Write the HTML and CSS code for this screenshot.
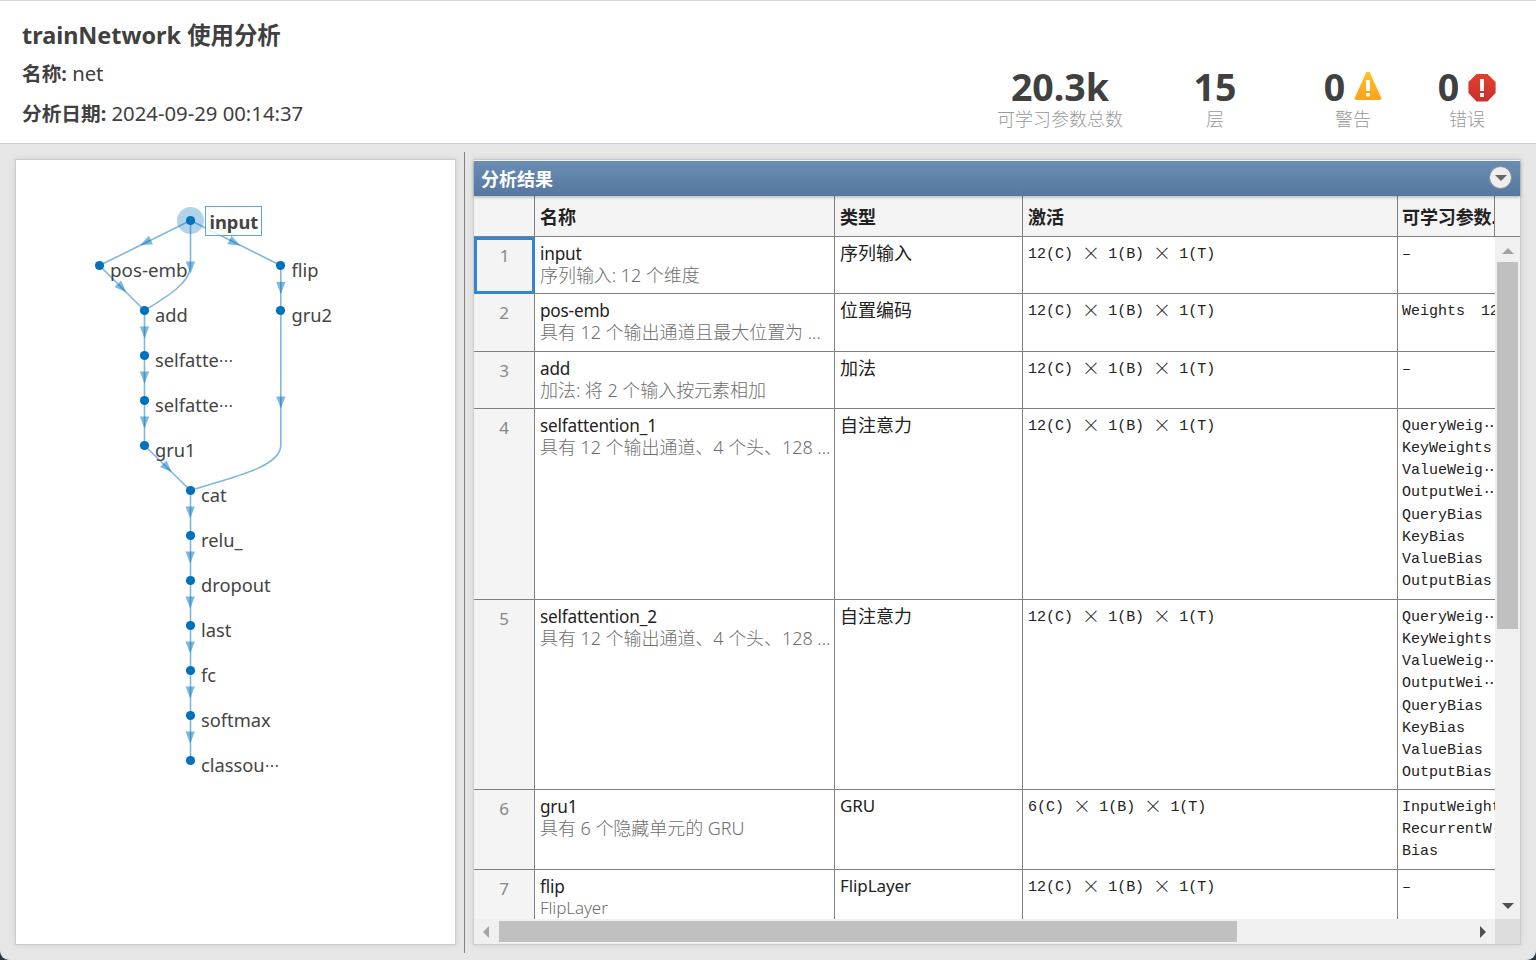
FILE: index.html
```
<!DOCTYPE html>
<html lang="zh-CN">
<head>
    <meta charset="UTF-8">
    <meta name="viewport" content="width=device-width, initial-scale=1.0">
    <title>trainNetwork 使用分析</title>
    <link rel="stylesheet" href="styles.css">
</head>
<body>
<div class="app">

    <!-- Header -->
    <header class="header">
        <div class="info">
            <h1>trainNetwork 使用分析</h1>
            <p><b>名称:</b> <span class="date">net</span></p>
            <p><b>分析日期:</b> <span class="date">2024-09-29 00:14:37</span></p>
        </div>
        <div class="stats">
            <div class="stat stat-params">
                <div class="value">20.3k</div>
                <div class="caption">可学习参数总数</div>
            </div>
            <div class="stat stat-layers">
                <div class="value">15</div>
                <div class="caption">层</div>
            </div>
            <div class="stat stat-warnings">
                <div class="value">0
                    <svg width="28" height="30" viewBox="0 0 28 30">
                        <defs>
                            <linearGradient id="warn" x1="0" y1="0" x2="0" y2="1">
                                <stop offset="0" stop-color="#fdc02f"/>
                                <stop offset="1" stop-color="#fba31b"/>
                            </linearGradient>
                        </defs>
                        <path d="M12.2 .6Q14 -1.8 15.8 .6L27.2 25.4Q27.8 28 25.4 28H2.6Q.2 28 .8 25.4Z" fill="url(#warn)"/>
                        <path d="M12.1 8h3.8v11h-3.8zM12.1 21h3.8v3.6h-3.8z" fill="#fff"/>
                    </svg>
                </div>
                <div class="caption">警告</div>
            </div>
            <div class="stat stat-errors">
                <div class="value">0
                    <svg width="28" height="30" viewBox="0 0 28 30">
                        <defs>
                            <linearGradient id="err" x1="0" y1="0" x2="0" y2="1">
                                <stop offset="0" stop-color="#e0402f"/>
                                <stop offset="1" stop-color="#c9302a"/>
                            </linearGradient>
                        </defs>
                        <path d="M8.5 2h11L27.6 10v11l-8.1 8.5h-11L.4 21V10z" fill="url(#err)"/>
                        <path d="M12.1 7h3.8v12h-3.8zM12.1 21h3.8v4h-3.8z" fill="#fff"/>
                    </svg>
                </div>
                <div class="caption">错误</div>
            </div>
        </div>
    </header>

    <main class="main">

        <!-- Network graph -->
        <section class="graph">
            <svg width="439" height="784" viewBox="16 160 439 784">
                <defs>
                    <path id="arrow" d="M-4.7 -6H4.7L0 6Z"/>
                </defs>
                <g class="edges">
                    <path d="M190.5 220.5L99.5 265.5L144.5 310.5V445.5L190.5 490.5V760.5"/>
                    <path d="M190.5 220.5V266C190.5 283 165 298 144.5 310.5"/>
                    <path d="M190.5 220.5L280.8 265.5V445C281 468 228 478 190.5 490.5"/>
                </g>
                <g class="arrows">
                    <use href="#arrow" transform="translate(145.5 242.7) rotate(63.7)"/>
                    <use href="#arrow" transform="translate(234.8 242.7) rotate(-63.5)"/>
                    <use href="#arrow" transform="translate(190.5 267.5)"/>
                    <use href="#arrow" transform="translate(122 288) rotate(-45)"/>
                    <use href="#arrow" transform="translate(280.8 288)"/>
                    <use href="#arrow" transform="translate(280.8 402.5)"/>
                    <use href="#arrow" transform="translate(144.5 332.5)"/>
                    <use href="#arrow" transform="translate(144.5 377.5)"/>
                    <use href="#arrow" transform="translate(144.5 422.5)"/>
                    <use href="#arrow" transform="translate(167.5 468) rotate(-45)"/>
                    <use href="#arrow" transform="translate(190.2 512.5)"/>
                    <use href="#arrow" transform="translate(190.2 557.5)"/>
                    <use href="#arrow" transform="translate(190.2 602.5)"/>
                    <use href="#arrow" transform="translate(190.2 647.5)"/>
                    <use href="#arrow" transform="translate(190.2 692.5)"/>
                    <use href="#arrow" transform="translate(190.2 737.5)"/>
                </g>
                <circle class="halo" cx="190.5" cy="220.5" r="13.5"/>
                <g class="nodes">
                    <circle cx="190.5" cy="220.5" r="4.6"/>
                    <circle cx="99.5" cy="265.5" r="4.6"/>
                    <circle cx="280.5" cy="265.5" r="4.6"/>
                    <circle cx="144.5" cy="310.5" r="4.6"/>
                    <circle cx="280.5" cy="310.5" r="4.6"/>
                    <circle cx="144.5" cy="355.5" r="4.6"/>
                    <circle cx="144.5" cy="400.5" r="4.6"/>
                    <circle cx="144.5" cy="445.5" r="4.6"/>
                    <circle cx="190.5" cy="490.5" r="4.6"/>
                    <circle cx="190.5" cy="535.5" r="4.6"/>
                    <circle cx="190.5" cy="580.5" r="4.6"/>
                    <circle cx="190.5" cy="625.5" r="4.6"/>
                    <circle cx="190.5" cy="670.5" r="4.6"/>
                    <circle cx="190.5" cy="715.5" r="4.6"/>
                    <circle cx="190.5" cy="760.5" r="4.6"/>
                </g>
                <rect class="selected-box" x="205.5" y="206.5" width="56" height="29"/>
                <g class="labels">
                    <text class="selected" x="209.5" y="229">input</text>
                    <text class="wide" x="110" y="277">pos-emb</text>
                    <text x="291.5" y="277">flip</text>
                    <text x="155" y="322">add</text>
                    <text x="291.5" y="322">gru2</text>
                    <text x="155" y="367">selfatte<tspan class="dots">⋯</tspan></text>
                    <text x="155" y="412">selfatte<tspan class="dots">⋯</tspan></text>
                    <text x="155" y="457">gru1</text>
                    <text x="201" y="502">cat</text>
                    <text x="201" y="547">relu_</text>
                    <text x="201" y="592">dropout</text>
                    <text x="201" y="637">last</text>
                    <text x="201" y="682">fc</text>
                    <text x="201" y="727">softmax</text>
                    <text x="201" y="772">classou<tspan class="dots">⋯</tspan></text>
                </g>
            </svg>
        </section>

        <div class="divider"></div>

        <!-- Analysis result -->
        <section class="result">
            <div class="result-title">
                <span class="result-name">分析结果</span>
                <span class="menu-button">
                    <svg width="12" height="6" viewBox="0 0 12 6"><path d="M0 0h12L6 6z" fill="#666"/></svg>
                </span>
            </div>
            <div class="row head">
                <div class="cell num"></div>
                <div class="cell">名称</div>
                <div class="cell">类型</div>
                <div class="cell">激活</div>
                <div class="cell last">可学习参数...</div>
            </div>
            <div class="viewport">
                <div class="rows">
                    <div class="row">
                        <div class="cell num current">1</div>
                        <div class="cell"><div class="name">input</div><div class="desc">序列输入: 12 个维度</div></div>
                        <div class="cell">序列输入</div>
                        <div class="cell mono">12(C) <i>×</i> 1(B) <i>×</i> 1(T)</div>
                        <div class="cell mono last">–</div>
                    </div>
                    <div class="row row-58">
                        <div class="cell num">2</div>
                        <div class="cell"><div class="name">pos-emb</div><div class="desc">具有 12 个输出通道且最大位置为 ...</div></div>
                        <div class="cell">位置编码</div>
                        <div class="cell mono">12(C) <i>×</i> 1(B) <i>×</i> 1(T)</div>
                        <div class="cell mono last params"><span>Weights</span><span>12</span></div>
                    </div>
                    <div class="row">
                        <div class="cell num">3</div>
                        <div class="cell"><div class="name">add</div><div class="desc">加法: 将 2 个输入按元素相加</div></div>
                        <div class="cell">加法</div>
                        <div class="cell mono">12(C) <i>×</i> 1(B) <i>×</i> 1(T)</div>
                        <div class="cell mono last">–</div>
                    </div>
                    <div class="row row-191">
                        <div class="cell num">4</div>
                        <div class="cell"><div class="name">selfattention_1</div><div class="desc">具有 12 个输出通道、4 个头、128 ...</div></div>
                        <div class="cell">自注意力</div>
                        <div class="cell mono">12(C) <i>×</i> 1(B) <i>×</i> 1(T)</div>
                        <div class="cell mono last">QueryWeig<s>⋯</s><br>KeyWeights<br>ValueWeig<s>⋯</s><br>OutputWei<s>⋯</s><br>QueryBias<br>KeyBias<br>ValueBias<br>OutputBias</div>
                    </div>
                    <div class="row row-190">
                        <div class="cell num">5</div>
                        <div class="cell"><div class="name">selfattention_2</div><div class="desc">具有 12 个输出通道、4 个头、128 ...</div></div>
                        <div class="cell">自注意力</div>
                        <div class="cell mono">12(C) <i>×</i> 1(B) <i>×</i> 1(T)</div>
                        <div class="cell mono last">QueryWeig<s>⋯</s><br>KeyWeights<br>ValueWeig<s>⋯</s><br>OutputWei<s>⋯</s><br>QueryBias<br>KeyBias<br>ValueBias<br>OutputBias</div>
                    </div>
                    <div class="row row-80">
                        <div class="cell num">6</div>
                        <div class="cell"><div class="name">gru1</div><div class="desc">具有 6 个隐藏单元的 GRU</div></div>
                        <div class="cell latin">GRU</div>
                        <div class="cell mono">6(C) <i>×</i> 1(B) <i>×</i> 1(T)</div>
                        <div class="cell mono last">InputWeights<br>RecurrentW<s>⋯</s><br>Bias</div>
                    </div>
                    <div class="row">
                        <div class="cell num">7</div>
                        <div class="cell"><div class="name">flip</div><div class="desc latin">FlipLayer</div></div>
                        <div class="cell latin">FlipLayer</div>
                        <div class="cell mono">12(C) <i>×</i> 1(B) <i>×</i> 1(T)</div>
                        <div class="cell mono last">–</div>
                    </div>
                </div>
                <div class="vscroll">
                    <svg width="12" height="6" viewBox="0 0 12 6"><path d="M0 6h12L6 0z" fill="#a3a3a3"/></svg>
                    <div class="vthumb"></div>
                    <svg class="down" width="12" height="6" viewBox="0 0 12 6"><path d="M0 0h12L6 6z" fill="#505050"/></svg>
                </div>
            </div>
            <div class="hscroll">
                <svg width="6" height="12" viewBox="0 0 6 12"><path d="M6 0v12L0 6z" fill="#a3a3a3"/></svg>
                <div class="hthumb"></div>
                <svg class="right" width="6" height="12" viewBox="0 0 6 12"><path d="M0 0v12l6-6z" fill="#505050"/></svg>
                <div class="corner"></div>
            </div>
        </section>
    </main>
</div>
</body>
</html>
```
FILE: styles.css
```
* {
    box-sizing: border-box;
}

html {
    background-color: #2b3644;
}

body {
    margin: 0;
    font-family: "Noto Sans", "Noto Sans CJK SC", sans-serif;
    font-size: 18px;
    color: #222;
}

svg {
    display: block;
    flex: none;
}

.app {
    display: flex;
    flex-direction: column;
    height: 960px;
    overflow: hidden;
    background-color: #e6e6e6;
    border-top: 1px solid #dadada;
    border-radius: 0 0 9px 9px;
}

/* Header */
.header {
    display: flex;
    justify-content: space-between;
    height: 143px;
    padding: 0 24px 0 22px;
    background-color: #fff;
    border-bottom: 1px solid #ccc;
    color: #404040;
}

.info {
    padding-top: 16px;
}

.info h1 {
    margin: 0;
    font-size: 23.4px;
    line-height: 37px;
}

.info p {
    height: 40px;
    margin: 0;
    font-size: 20px;
    line-height: 38px;
}

.info b {
    font-size: 19.7px;
}

.date {
    font-size: 20.3px;
}

.stats {
    display: flex;
    padding-top: 66px;
}

.stat {
    display: flex;
    flex-direction: column;
    align-items: center;
}

.stat-params { width: 172px; }
.stat-layers { width: 138px; }
.stat-warnings { width: 138px; }
.stat-errors { width: 90px; }

.value {
    display: flex;
    align-items: center;
    gap: 9px;
    height: 40px;
    margin-bottom: 1px;
    font-size: 37.5px;
    line-height: 40px;
    font-weight: bold;
}

.caption {
    font-size: 18px;
    line-height: 22px;
    color: #999;
    font-weight: 300;
}

/* Panels */
.main {
    display: flex;
    flex: 1;
    padding: 8px 15px 7px;
}

.graph {
    width: 441px;
    height: 786px;
    margin-top: 7px;
    background-color: #fff;
    border: 1px solid #ccc;
    box-shadow: 0 0 5px rgba(0, 0, 0, 0.1);
}

.divider {
    width: 1px;
    margin: 0 8px;
    background-color: #808080;
}

.result {
    display: flex;
    flex-direction: column;
    width: 1048px;
    height: 786px;
    margin-top: 7px;
    background-color: #fff;
    border: 1px solid #ccc;
    box-shadow: 0 0 5px rgba(0, 0, 0, 0.1);
}

/* Network graph */
.edges {
    fill: none;
    stroke: #0072bd;
    stroke-opacity: 0.5;
    stroke-width: 1.6;
}

.arrows {
    fill: #0072bd;
    fill-opacity: 0.5;
}

.halo {
    fill: #0072bd;
    fill-opacity: 0.3;
}

.nodes {
    fill: #0072bd;
}

.selected-box {
    fill: #fff;
    fill-opacity: 0.8;
    stroke: #5fa5d4;
}

.labels {
    font-size: 18.3px;
    fill: #444;
}

.labels .selected {
    font-weight: bold;
}

.labels .wide {
    font-size: 18.8px;
}

.dots {
    font-size: 14.5px;
}

/* Result table */
.result-title {
    display: flex;
    justify-content: space-between;
    align-items: center;
    height: 35px;
    margin-top: 1px;
    padding: 0 8px 0 7px;
    background: linear-gradient(#698db5, #56789f);
    color: #fff;
    font-weight: bold;
    box-shadow: 0 1px 3px rgba(0, 0, 0, 0.3);
    z-index: 1;
}

.result-name {
    margin-bottom: 2px;
}

.menu-button {
    display: flex;
    align-items: center;
    justify-content: center;
    width: 23px;
    height: 23px;
    margin-bottom: 2px;
    background-color: #eee;
    border: 1px solid #888;
    border-radius: 50%;
}

.row {
    display: grid;
    grid-template-columns: 61px 300px 188px 375px 97px;
    height: 57px;
    border-bottom: 1px solid #808080;
}

.row-58 { height: 58px; }
.row-191 { height: 191px; }
.row-190 { height: 190px; }
.row-80 { height: 80px; }

.cell {
    padding: 5px 0 0 5px;
    border-right: 1px solid #808080;
    line-height: 22px;
    white-space: nowrap;
    overflow: hidden;
}

.cell.last {
    border-right: none;
}

.head {
    height: 41px;
    background-color: #f4f4f4;
    font-weight: bold;
}

.head .cell {
    padding-top: 10px;
}

.head .cell.last {
    padding-left: 4px;
    border-right: 1px solid #808080;
    letter-spacing: -0.1px;
}

.num {
    padding: 8px 0 0;
    background-color: #f4f4f4;
    color: #888;
    font-size: 17px;
    text-align: center;
}

.num.current {
    margin-bottom: -1px;
    padding: 5px 0 0;
    border: 3px solid #2f87d0;
    z-index: 1;
}

.name {
    margin-bottom: -2px;
    font-size: 17.2px;
    line-height: 24px;
    letter-spacing: -0.2px;
}

.desc {
    color: #6e6e6e;
    font-weight: 300;
    letter-spacing: -0.05px;
}

.latin {
    font-size: 17px;
    letter-spacing: -0.1px;
}

.mono {
    padding-top: 7px;
    font-family: "Liberation Mono", monospace;
    font-size: 15px;
    line-height: 22.14px;
    letter-spacing: -0.02px;
}

.mono.last {
    padding-left: 4px;
}

.params {
    display: flex;
    gap: 16px;
}

/* Full-width signs inside the monospace columns */
.mono i,
.mono s {
    display: inline-block;
    width: 18px;
    height: 22px;
    font-family: "Noto Sans CJK SC", sans-serif;
    font-style: normal;
    line-height: 19px;
    text-align: center;
    text-decoration: none;
    vertical-align: top;
}

.mono i {
    width: 17.3px;
    font-size: 18px;
    font-weight: 300;
    line-height: 16px;
}

.viewport {
    display: flex;
    flex: 1;
    overflow: hidden;
}

.rows {
    width: 1021px;
}

/* Scrollbars */
.vscroll {
    display: flex;
    flex-direction: column;
    align-items: center;
    width: 25px;
    padding: 11px 0 10px;
    background-color: #f0f0f0;
}

.vthumb {
    width: 21px;
    height: 367px;
    margin-top: 8px;
    background-color: #c0c0c0;
}

.down {
    margin-top: auto;
}

.hscroll {
    display: flex;
    align-items: center;
    height: 25px;
    padding-left: 9px;
    background-color: #f0f0f0;
}

.hthumb {
    width: 738px;
    height: 21px;
    margin-left: 10px;
    background-color: #c0c0c0;
}

.right {
    margin: 0 9px 0 auto;
}

.corner {
    width: 25px;
    height: 25px;
    background-color: #dcdcdc;
}
```
